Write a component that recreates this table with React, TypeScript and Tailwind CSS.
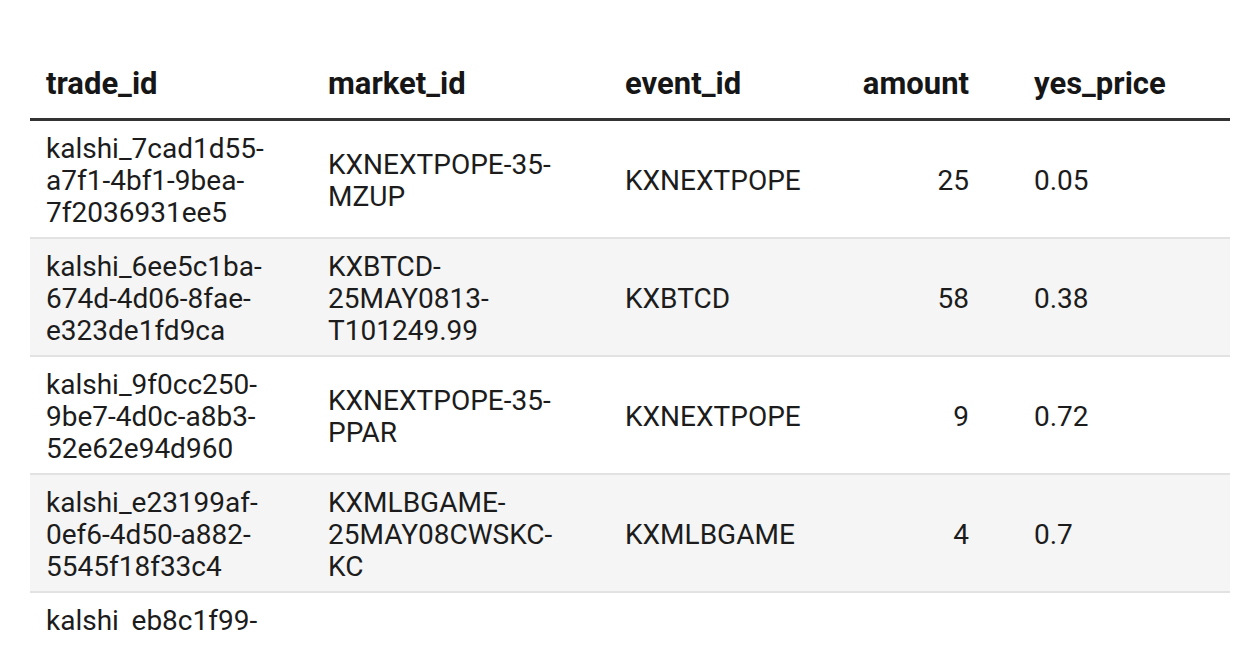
import React from "react"

type Trade = {
  trade_id: string[]
  market_id: string[]
  event_id: string
  amount: string
  yes_price: string
}

const trades: Trade[] = [
  {
    trade_id: ["kalshi_7cad1d55-", "a7f1-4bf1-9bea-", "7f2036931ee5"],
    market_id: ["KXNEXTPOPE-35-", "MZUP"],
    event_id: "KXNEXTPOPE",
    amount: "25",
    yes_price: "0.05",
  },
  {
    trade_id: ["kalshi_6ee5c1ba-", "674d-4d06-8fae-", "e323de1fd9ca"],
    market_id: ["KXBTCD-", "25MAY0813-", "T101249.99"],
    event_id: "KXBTCD",
    amount: "58",
    yes_price: "0.38",
  },
  {
    trade_id: ["kalshi_9f0cc250-", "9be7-4d0c-a8b3-", "52e62e94d960"],
    market_id: ["KXNEXTPOPE-35-", "PPAR"],
    event_id: "KXNEXTPOPE",
    amount: "9",
    yes_price: "0.72",
  },
  {
    trade_id: ["kalshi_e23199af-", "0ef6-4d50-a882-", "5545f18f33c4"],
    market_id: ["KXMLBGAME-", "25MAY08CWSKC-", "KC"],
    event_id: "KXMLBGAME",
    amount: "4",
    yes_price: "0.7",
  },
  {
    trade_id: ["kalshi_eb8c1f99-", "0a1b-4c2d-9e3f-", "5d6c7b8a9f01"],
    market_id: ["KXBTCD"],
    event_id: "KXBTCD",
    amount: "12",
    yes_price: "0.06",
  },
]

const Lines = ({ lines }: { lines: string[] }) => (
  <div className="flex flex-col">
    {lines.map((l, i) => (
      <span key={i}>{l}</span>
    ))}
  </div>
)

const App = () => {
  return (
    <div
      className="h-[630px] w-[1260px] overflow-hidden bg-white text-[28px] leading-[32px] text-[#1c1c1c]"
      style={{ fontFamily: "Roboto, 'Liberation Sans', sans-serif" }}
    >
      <div className="ml-[30px] w-[1200px] overflow-hidden pt-[64px]">
        <div className="w-[1400px]">
          <div className="flex h-[57px] items-start border-b-[3px] border-[#333333] pt-[4px] text-[31px] font-bold text-[#161616]">
            <div className="w-[282px] shrink-0 pl-4">trade_id</div>
            <div className="w-[297px] shrink-0 pl-4">market_id</div>
            <div className="w-[240px] shrink-0 pl-4">event_id</div>
            <div className="w-[152px] shrink-0 pr-8 text-right">amount</div>
            <div className="w-[228px] shrink-0 pl-[33px]">yes_price</div>
            <div className="w-[200px] shrink-0 pl-4">no_price</div>
          </div>
          {trades.map((t, i) => (
            <div
              key={i}
              className={
                "flex h-[118px] items-center border-b-2 border-[#e2e2e2] pt-[3px] " +
                (i % 2 === 1 ? "bg-[#f5f5f5]" : "bg-white")
              }
            >
              <div className="w-[282px] shrink-0 pl-4">
                <Lines lines={t.trade_id} />
              </div>
              <div className="w-[297px] shrink-0 pl-4">
                <Lines lines={t.market_id} />
              </div>
              <div className="w-[240px] shrink-0 pl-4">{t.event_id}</div>
              <div className="w-[152px] shrink-0 pr-8 text-right">{t.amount}</div>
              <div className="w-[228px] shrink-0 pl-[33px]">{t.yes_price}</div>
              <div className="w-[200px] shrink-0 pl-4">0.95</div>
            </div>
          ))}
        </div>
      </div>
    </div>
  )
}

export default App
